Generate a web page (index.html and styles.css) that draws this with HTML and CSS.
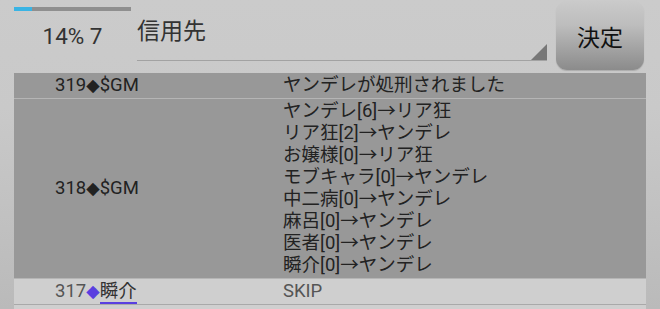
FILE: index.html
```html
<!DOCTYPE html>
<html lang="ja">
<head>
    <meta charset="UTF-8">
    <title>ログ</title>
    <link rel="stylesheet" href="styles.css">
</head>
<body>
    <div class="header">
        <div class="status">
            <div class="progress"><div class="progress-fill" style="width: 15%"></div></div>
            <div class="count">14% 7</div>
        </div>
        <div class="select">
            <span class="select-value">信用先</span>
            <span class="select-arrow"></span>
        </div>
        <button class="decide">決定</button>
    </div>

    <table class="log">
        <tr class="row-system">
            <td class="who">319<span class="diamond">◆</span>$GM</td>
            <td class="what">ヤンデレが処刑されました</td>
        </tr>
        <tr class="row-system">
            <td class="who">318<span class="diamond">◆</span>$GM</td>
            <td class="what">
                ヤンデレ[6]→リア狂<br>
                リア狂[2]→ヤンデレ<br>
                お嬢様[0]→リア狂<br>
                モブキャラ[0]→ヤンデレ<br>
                中二病[0]→ヤンデレ<br>
                麻呂[0]→ヤンデレ<br>
                医者[0]→ヤンデレ<br>
                瞬介[0]→ヤンデレ
            </td>
        </tr>
        <tr class="row-player">
            <td class="who">317<span class="diamond mark">◆</span><a class="name" href="#">瞬介</a></td>
            <td class="what">SKIP</td>
        </tr>
        <tr class="row-player row-empty">
            <td class="who"></td>
            <td class="what"></td>
        </tr>
    </table>
</body>
</html>
```

FILE: styles.css
```css
html, body {
    height: 100%;
}
body {
    margin: 0;
    padding: 0 14px;
    overflow: hidden;
    font-family: "Roboto", "Noto Sans CJK JP", sans-serif;
    color: #222;
    background: linear-gradient(#cbcbcb 0%, #c9c9c9 35%, #bababa 100%);
}
.header {
    display: flex;
    align-items: flex-start;
    height: 73px;
}
.status {
    width: 117px;
    padding-top: 7px;
}
.progress {
    height: 4px;
    background-color: #8f8f8f;
}
.progress-fill {
    height: 100%;
    background-color: #3ab4e4;
}
.count {
    margin-top: 12px;
    font-size: 22.5px;
    line-height: 26px;
    text-align: center;
    color: #333;
}
.select {
    position: relative;
    width: 410px;
    height: 61px;
    margin-left: 6px;
    border-bottom: 1px solid #a2a2a2;
    box-sizing: border-box;
}
.select-value {
    display: block;
    padding-top: 17px;
    font-size: 23px;
    line-height: 30px;
    color: #333;
}
.select-arrow {
    position: absolute;
    right: 0;
    bottom: 0;
    width: 0;
    height: 0;
    border-left: 16px solid transparent;
    border-bottom: 16px solid #777;
}
.decide {
    width: 88px;
    height: 69px;
    margin: 1px 0 0 9px;
    padding: 0;
    border: none;
    border-radius: 11px;
    background: linear-gradient(#cacaca 0%, #bdbdbd 35%, #8b8b8b 100%);
    box-shadow: 0 1px 1px rgba(0, 0, 0, 0.15);
    font-family: "Noto Sans CJK JP", sans-serif;
    font-size: 23px;
    color: #111;
}
.log {
    width: 632px;
    border-collapse: collapse;
    font-size: 18.5px;
    line-height: 22px;
}
.log td {
    padding: 1px 0 2px;
    vertical-align: middle;
}
.who {
    width: 228px;
    padding-left: 41px !important;
}
.diamond {
    font-family: "DejaVu Sans", sans-serif;
    font-size: 17.5px;
    line-height: 1;
}
.row-system {
    background-color: #989898;
    border-bottom: 1px solid #b5b5b5;
}
.row-player {
    background-color: #cfcfcf;
    color: #555;
    border-bottom: 1px solid #a9a9a9;
}
.row-empty td {
    height: 22px;
}
.mark {
    color: #5a3fe0;
}
.name {
    color: #333;
    text-decoration: none;
    border-bottom: 2px solid #5a3fe0;
}
```
